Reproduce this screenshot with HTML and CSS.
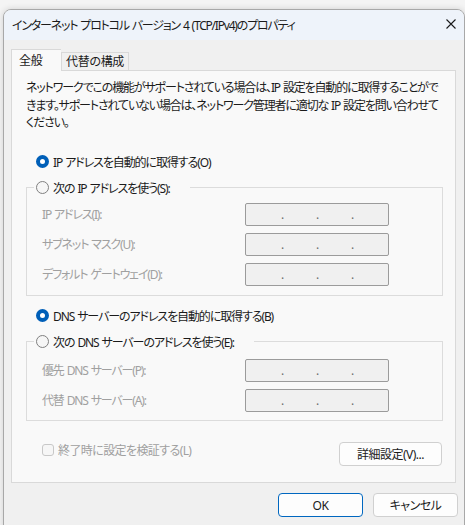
FILE: index.html
```html
<!DOCTYPE html>
<html lang="ja">
<head>
    <meta charset="UTF-8">
    <title>インターネット プロトコル バージョン 4 (TCP/IPv4)のプロパティ</title>
    <link rel="stylesheet" href="styles.css">
</head>
<body>
    <div class="dialog">
        <div class="titlebar">
            <span class="title">インターネット プロトコル バージョン 4 (TCP/IPv4)のプロパティ</span>
            <svg class="close" width="10" height="10" viewBox="0 0 10 10">
                <path d="M0.5 0.5 L9.5 9.5 M9.5 0.5 L0.5 9.5" stroke="#1a1a1a" stroke-width="1.1" fill="none"/>
            </svg>
        </div>

        <div class="dialog-body">
            <div class="tabs">
                <div class="tab active">全般</div>
                <div class="tab">代替の構成</div>
            </div>

            <div class="panel">
                <p class="desc">ネットワークでこの機能がサポートされている場合は、IP 設定を自動的に取得することがで<br>きます。サポートされていない場合は、ネットワーク管理者に適切な IP 設定を問い合わせて<br>ください。</p>

                <label class="radio checked"><span class="dot"></span>IP アドレスを自動的に取得する(O)</label>

                <fieldset class="group">
                    <legend><label class="radio"><span class="dot"></span>次の IP アドレスを使う(S):</label></legend>
                    <div class="field">
                        <span class="field-label">IP アドレス(I):</span>
                        <div class="ipbox"><span class="octet"></span><span class="sep">.</span><span class="octet"></span><span class="sep">.</span><span class="octet"></span><span class="sep">.</span><span class="octet"></span></div>
                    </div>
                    <div class="field">
                        <span class="field-label">サブネット マスク(U):</span>
                        <div class="ipbox"><span class="octet"></span><span class="sep">.</span><span class="octet"></span><span class="sep">.</span><span class="octet"></span><span class="sep">.</span><span class="octet"></span></div>
                    </div>
                    <div class="field">
                        <span class="field-label">デフォルト ゲートウェイ(D):</span>
                        <div class="ipbox"><span class="octet"></span><span class="sep">.</span><span class="octet"></span><span class="sep">.</span><span class="octet"></span><span class="sep">.</span><span class="octet"></span></div>
                    </div>
                </fieldset>

                <label class="radio checked dns-auto"><span class="dot"></span>DNS サーバーのアドレスを自動的に取得する(B)</label>

                <fieldset class="group dns">
                    <legend><label class="radio"><span class="dot"></span>次の DNS サーバーのアドレスを使う(E):</label></legend>
                    <div class="field">
                        <span class="field-label">優先 DNS サーバー(P):</span>
                        <div class="ipbox"><span class="octet"></span><span class="sep">.</span><span class="octet"></span><span class="sep">.</span><span class="octet"></span><span class="sep">.</span><span class="octet"></span></div>
                    </div>
                    <div class="field">
                        <span class="field-label">代替 DNS サーバー(A):</span>
                        <div class="ipbox"><span class="octet"></span><span class="sep">.</span><span class="octet"></span><span class="sep">.</span><span class="octet"></span><span class="sep">.</span><span class="octet"></span></div>
                    </div>
                </fieldset>

                <div class="panel-foot">
                    <label class="check"><span class="box"></span>終了時に設定を検証する(L)</label>
                    <button class="btn wide">詳細設定(V)...</button>
                </div>
            </div>

            <div class="actions">
                <button class="btn primary">OK</button>
                <button class="btn">キャンセル</button>
            </div>
        </div>
    </div>
</body>
</html>
```

FILE: styles.css
```css
body {
    margin: 0;
    padding: 9px 0 0 3px;
    height: 525px;
    box-sizing: border-box;
    overflow: hidden;
    background-color: #f4f4f4;
    font-family: "Noto Sans", "Noto Sans CJK JP", sans-serif;
    font-feature-settings: "palt";
    font-size: 12px;
    letter-spacing: -1.1px;
    word-spacing: 1px;
    color: #1b1b1b;
}

/* Window frame */
.dialog {
    width: 460px;
    height: 540px;
    border: 1px solid #a8a8a8;
    border-radius: 8px 8px 0 0;
    background-color: #f0f0f0;
    overflow: hidden;
    box-shadow: 0 0 6px rgba(0, 0, 0, 0.15);
}

.titlebar {
    height: 30px;
    padding: 0 8px;
    background-color: #eef3fa;
    display: flex;
    justify-content: space-between;
    align-items: center;
}

.title {
    white-space: nowrap;
    letter-spacing: -1.2px;
}

.close {
    margin-top: -2px;
}

.dialog-body {
    padding: 9px 8px 0 7px;
}

/* Tabs */
.tabs {
    display: flex;
    align-items: flex-end;
    height: 21px;
    position: relative;
    z-index: 1;
    letter-spacing: -0.3px;
}

.tab {
    height: 18px;
    line-height: 18px;
    padding: 0 4px;
    border: 1px solid #d9d9d9;
    border-bottom: none;
    background-color: #f0f0f0;
    box-sizing: border-box;
    white-space: nowrap;
}

.tab.active {
    width: 50px;
    height: 22px;
    line-height: 21px;
    padding: 0 0 0 7px;
    background-color: #f9f9f9;
    margin-bottom: -1px;
    border-right: none;
}

.tab + .tab {
    border-left: 1px solid #d9d9d9;
}

/* Tab page */
.panel {
    height: 413px;
    box-sizing: border-box;
    border: 1px solid #d9d9d9;
    background-color: #f9f9f9;
    display: flex;
    flex-direction: column;
}

.desc {
    margin: 0;
    padding: 8px 14px 0;
    line-height: 17.5px;
    white-space: nowrap;
    letter-spacing: -1.15px;
}

.radio {
    display: flex;
    align-items: center;
    height: 20px;
    gap: 4px;
    white-space: nowrap;
}

.panel > .radio {
    margin: 20px 0 0 24px;
}

.panel > .radio.dns-auto {
    margin-top: 10px;
}

.dot {
    width: 13px;
    height: 13px;
    border-radius: 50%;
    border: 1px solid #808080;
    background-color: #f6f6f6;
    box-sizing: border-box;
    flex: none;
}

.radio.checked .dot {
    border: 4px solid #005fb8;
    background-color: #ffffff;
}

.group {
    margin: 6px 12px 0 14px;
    padding: 5px 0 9px;
    border: 1px solid #dcdcdc;
    min-width: 0;
}

.group.dns {
    padding: 7px 0 8px;
}

.group legend {
    margin-left: 7px;
    padding: 0 20px 0 2px;
}

.field {
    display: flex;
    align-items: center;
    height: 23px;
    padding-left: 15px;
    color: #a0a0a0;
}

.field + .field {
    margin-top: 7px;
}

.field-label {
    width: 203px;
    white-space: nowrap;
    letter-spacing: -1.15px;
}

.ipbox {
    width: 144px;
    height: 23px;
    box-sizing: border-box;
    border: 1px solid #9b9b9b;
    border-radius: 2px;
    background-color: #f0f0f0;
    display: flex;
    padding-left: 3px;
    line-height: 22px;
    color: #6d6d6d;
    letter-spacing: 0;
}

.octet {
    width: 32px;
}

.sep {
    width: 3px;
    text-align: center;
}

.panel-foot {
    margin-top: 21px;
    padding: 0 13px 0 30px;
    display: flex;
    justify-content: space-between;
    align-items: flex-start;
}

.check {
    display: flex;
    align-items: center;
    gap: 4px;
    height: 17px;
    color: #a0a0a0;
    white-space: nowrap;
    letter-spacing: -0.6px;
}

.box {
    width: 12px;
    height: 12px;
    box-sizing: border-box;
    border: 1px solid #c8c8c8;
    border-radius: 3px;
    background-color: #f6f6f6;
}

/* Buttons */
.btn {
    font: inherit;
    font-feature-settings: "palt";
    letter-spacing: -0.5px;
    color: #1b1b1b;
    width: 85px;
    height: 24px;
    padding: 0;
    border: 1px solid #d0d0d0;
    border-radius: 4px;
    background-color: #fdfdfd;
}

.btn.wide {
    width: 103px;
}

.btn.primary {
    border: 1px solid #0067c0;
}

.actions {
    margin: 10px -2px 0 0;
    display: flex;
    justify-content: flex-end;
    gap: 10px;
}
```
